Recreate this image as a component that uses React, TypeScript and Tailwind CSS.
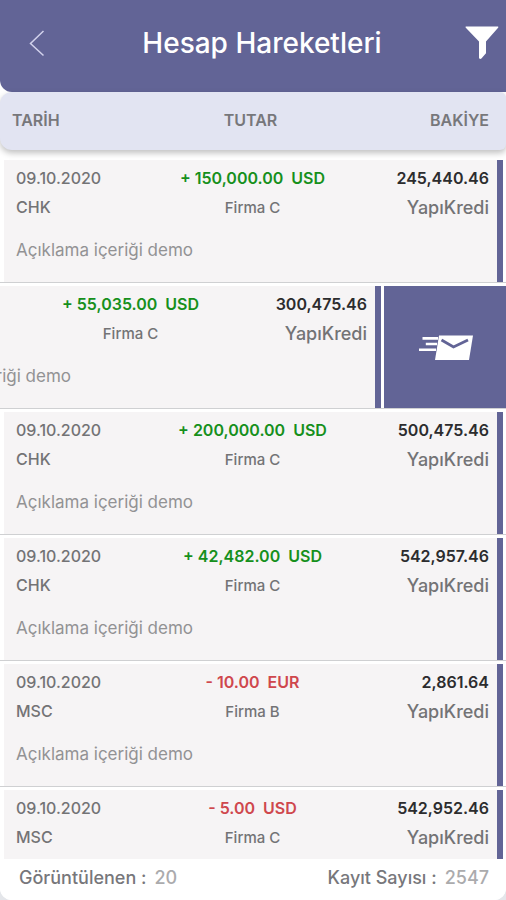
import clsx from "clsx";

interface Transaction {
  id: number;
  date: string;
  type: string;
  amount: string;
  currency: string;
  company: string;
  balance: string;
  bank: string;
  description?: string;
  // row is swiped to the left, the send action is visible
  swiped?: boolean;
}

const DESCRIPTION = "Açıklama içeriği demo";

const transactions: Transaction[] = [
  { id: 1, date: "09.10.2020", type: "CHK", amount: "+ 150,000.00", currency: "USD", company: "Firma C", balance: "245,440.46", bank: "YapıKredi", description: DESCRIPTION },
  { id: 2, date: "09.10.2020", type: "CHK", amount: "+ 55,035.00", currency: "USD", company: "Firma C", balance: "300,475.46", bank: "YapıKredi", description: DESCRIPTION, swiped: true },
  { id: 3, date: "09.10.2020", type: "CHK", amount: "+ 200,000.00", currency: "USD", company: "Firma C", balance: "500,475.46", bank: "YapıKredi", description: DESCRIPTION },
  { id: 4, date: "09.10.2020", type: "CHK", amount: "+ 42,482.00", currency: "USD", company: "Firma C", balance: "542,957.46", bank: "YapıKredi", description: DESCRIPTION },
  { id: 5, date: "09.10.2020", type: "MSC", amount: "- 10.00", currency: "EUR", company: "Firma B", balance: "2,861.64", bank: "YapıKredi", description: DESCRIPTION },
  { id: 6, date: "09.10.2020", type: "MSC", amount: "- 5.00", currency: "USD", company: "Firma C", balance: "542,952.46", bank: "YapıKredi" },
];

function BackIcon() {
  return (
    <svg width="16" height="28" viewBox="0 0 16 28" fill="none" stroke="#d2d2ec" strokeWidth="1.5" aria-hidden="true">
      <path d="M14.5 2 1.5 14.5 14.5 26.5" />
    </svg>
  );
}

function FilterIcon() {
  return (
    <svg width="34" height="34" viewBox="0 0 34 34" fill="#fff" aria-hidden="true">
      <path d="M1.2 0.5h31.4c.8 0 1 .7.5 1.3L21 15.4v11.8l-4.6 5.3c-.8.8-2.4.5-2.4-.7V15.4L.8 1.8C.3 1.2.5.5 1.2.5Z" />
    </svg>
  );
}

function SendMailIcon() {
  return (
    <svg width="56" height="28" viewBox="0 0 56 28" aria-hidden="true">
      <path d="M22 2.5H56L52 27H18Z" fill="#fff" />
      <path d="M24.5 7 36.5 14 51 7" fill="none" stroke="#626496" strokeWidth="2.8" />
      <path d="M5.5 5.4H21M8.8 11H20M2 16.8H19" stroke="#fff" strokeWidth="2.6" />
    </svg>
  );
}

function TransactionRow({ item }: { item: Transaction }) {
  return (
    <li className="flex overflow-hidden border-b border-[#cfd0d2] pt-[3px]">
      <div
        className={clsx(
          "flex h-[122px] w-full shrink-0 pr-[3px] pl-1",
          item.swiped && "-ml-[122px]"
        )}
      >
        <div className="min-w-0 flex-1 bg-[#f6f4f5] pr-2 pl-3">
          <div className="grid grid-cols-[1fr_auto_1fr] pt-1 text-[16px] leading-[29px] font-medium text-[#737375]">
            <span>{item.date}</span>
            <span
              className={clsx(
                "flex justify-center gap-2 font-semibold",
                item.amount.startsWith("+") ? "text-[#16901c]" : "text-[#cf474d]"
              )}
            >
              <span>{item.amount}</span>
              <span>{item.currency}</span>
            </span>
            <span className="text-right font-semibold text-[#2c2c2e]">{item.balance}</span>
            <span>{item.type}</span>
            <span className="text-center text-[15px]">{item.company}</span>
            <span className="text-right text-[18px]">{item.bank}</span>
          </div>
          {item.description && (
            <p className="mt-[14px] text-[17px] leading-[29px] text-[#929294]">{item.description}</p>
          )}
        </div>
        <div className="w-[6px] bg-[#626496]" />
      </div>
      {item.swiped && (
        <button
          type="button"
          aria-label="Gönder"
          className="flex w-[122px] shrink-0 items-center justify-center bg-[#626496]"
        >
          <SendMailIcon />
        </button>
      )}
    </li>
  );
}

export default function App() {
  return (
    <div className="flex h-screen flex-col bg-[#e4e6ea] font-['Inter','Liberation_Sans',sans-serif]">
      <div className="flex min-h-0 flex-1 flex-col overflow-hidden rounded-b-xl bg-white">
        <header className="flex h-[92px] shrink-0 items-center justify-between rounded-bl-xl bg-[#626496] pr-[7px] pb-[7px] pl-[29px]">
          <button type="button" aria-label="Geri" className="w-[30px]">
            <BackIcon />
          </button>
          <h1 className="text-[28px] leading-8 font-medium text-white">Hesap Hareketleri</h1>
          <button type="button" aria-label="Filtrele">
            <FilterIcon />
          </button>
        </header>

        <div className="z-10 grid h-[58px] shrink-0 grid-cols-3 items-center rounded-l-xl rounded-r-md bg-[#e2e4f2] pr-[17px] pb-[2px] pl-3 text-[16px] font-semibold text-[#77777b] shadow-[0_3px_6px_rgba(0,0,0,0.25)]">
          <span>TARİH</span>
          <span className="text-center">TUTAR</span>
          <span className="text-right">BAKİYE</span>
        </div>

        <ul className="min-h-0 flex-1 overflow-hidden pt-[7px]">
          {transactions.map((item) => (
            <TransactionRow key={item.id} item={item} />
          ))}
        </ul>

        <footer className="flex h-[41px] shrink-0 justify-between bg-white pt-[5px] pr-[17px] pl-[19px] text-[18px] leading-7 font-medium text-[#77777b]">
          <div className="flex gap-2">
            <span>Görüntülenen :</span>
            <span className="text-[#ababad]">20</span>
          </div>
          <div className="flex gap-2">
            <span>Kayıt Sayısı :</span>
            <span className="text-[#ababad]">2547</span>
          </div>
        </footer>
      </div>
    </div>
  );
}
